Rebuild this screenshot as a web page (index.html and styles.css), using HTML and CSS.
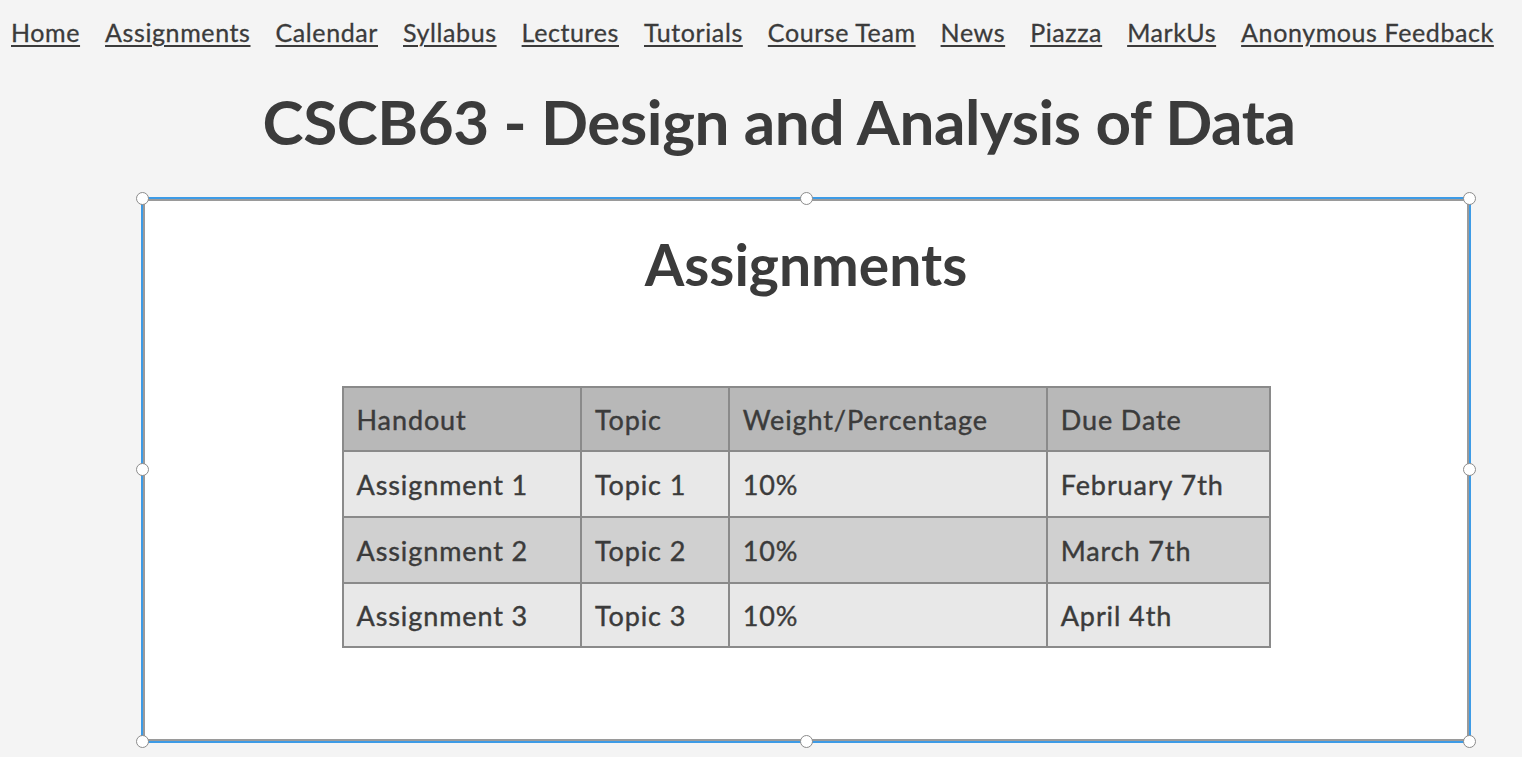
FILE: index.html
```html
<!DOCTYPE html>
<html lang="en">
<head>
<meta charset="utf-8">
<title>CSCB63 - Assignments</title>
<link rel="stylesheet" href="styles.css">
</head>
<body>
<nav class="nav">
  <a href="#">Home</a>
  <a href="#">Assignments</a>
  <a href="#">Calendar</a>
  <a href="#">Syllabus</a>
  <a href="#">Lectures</a>
  <a href="#">Tutorials</a>
  <a href="#">Course Team</a>
  <a href="#">News</a>
  <a href="#">Piazza</a>
  <a href="#">MarkUs</a>
  <a href="#">Anonymous Feedback</a>
</nav>
<h1 class="title">CSCB63 - Design and Analysis of Data</h1>
<section class="frame">
  <span class="handle h-tl"></span>
  <span class="handle h-tc"></span>
  <span class="handle h-tr"></span>
  <span class="handle h-ml"></span>
  <span class="handle h-mr"></span>
  <span class="handle h-bl"></span>
  <span class="handle h-bc"></span>
  <span class="handle h-br"></span>
  <h2 class="heading">Assignments</h2>
  <table class="grid">
    <thead>
      <tr><th class="c1">Handout</th><th class="c2">Topic</th><th class="c3">Weight/Percentage</th><th class="c4">Due Date</th></tr>
    </thead>
    <tbody>
      <tr><td>Assignment 1</td><td>Topic 1</td><td>10%</td><td>February 7th</td></tr>
      <tr><td>Assignment 2</td><td>Topic 2</td><td>10%</td><td>March 7th</td></tr>
      <tr class="last"><td>Assignment 3</td><td>Topic 3</td><td>10%</td><td>April 4th</td></tr>
    </tbody>
  </table>
</section>
</body>
</html>
```
FILE: styles.css
```css
html, body {
  margin: 0;
  padding: 0;
  background: #f4f4f4;
  color: #3b3b3b;
  font-family: Lato, "Open Sans", sans-serif;
}
body {
  width: 1522px;
  height: 757px;
  overflow: hidden;
}
.nav {
  display: flex;
  gap: 25px;
  padding: 15px 0 0 11px;
  height: 34px;
  font-size: 25px;
  letter-spacing: 0.6px;
}
.nav a {
  color: #3b3b3b;
  text-decoration: underline;
  text-underline-offset: 3px;
  text-decoration-thickness: 2px;
  line-height: 34px;
  -webkit-text-stroke: 0.3px #3b3b3b;
}
.title {
  margin: 27px 0 0 0;
  text-align: center;
  font-size: 62px;
  font-weight: 700;
  line-height: 90px;
  padding-left: 36px;
  letter-spacing: -0.4px;
}
.frame {
  position: relative;
  margin: 33px 0 0 143px;
  width: 1322px;
  height: 538px;
  background: #fff;
  border: 2px solid #9a9a9a;
  box-shadow: 0 0 0 2px #3d9be6;
  display: flex;
  flex-direction: column;
  align-items: center;
}
.handle {
  position: absolute;
  width: 11px;
  height: 11px;
  border-radius: 50%;
  background: #fff;
  border: 1px solid #8c8c8c;
}
.h-tl { left: -9px; top: -9px; }
.h-tc { left: 655px; top: -9px; }
.h-tr { right: -9px; top: -9px; }
.h-ml { left: -9px; top: 262px; }
.h-mr { right: -9px; top: 262px; }
.h-bl { left: -9px; bottom: -9px; }
.h-bc { left: 655px; bottom: -9px; }
.h-br { right: -9px; bottom: -9px; }
.heading {
  margin: 28px 0 0 0;
  font-size: 57px;
  font-weight: 700;
  line-height: 70px;
}
.grid {
  margin-top: 87px;
  border-collapse: collapse;
  font-size: 27px;
  letter-spacing: 0.9px;
  width: 929px;
}
.grid th, .grid td {
  border: 2px solid #8a8a8a;
  text-align: left;
  padding: 0 0 0 13px;
  height: 64px;
  font-weight: 400;
  -webkit-text-stroke: 0.4px #3b3b3b;
}
.grid th { background: #b8b8b8; height: 62px; }
.grid tr.last td { height: 62px; }
.grid tbody tr:nth-child(odd) td { background: #e8e8e8; }
.grid tbody tr:nth-child(even) td { background: #d0d0d0; }
.c1 { width: 226px; }
.c2 { width: 135px; }
.c3 { width: 305px; }
.c4 { width: 211px; }
```
